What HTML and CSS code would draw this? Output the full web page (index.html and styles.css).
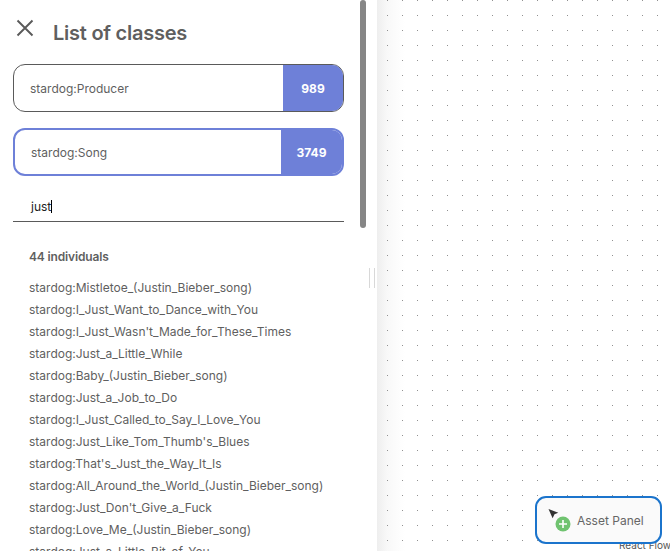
FILE: index.html
```html
<!DOCTYPE html>
<html lang="en">
<head>
<meta charset="utf-8">
<title>List of classes</title>
<link rel="stylesheet" href="styles.css">
</head>
<body>
<div class="app">
  <aside class="sidebar">
    <div class="content">
      <header class="header">
        <svg class="close" width="18" height="18" viewBox="0 0 18 18"><path d="M1.5 1.5 16.5 16.5M16.5 1.5 1.5 16.5"/></svg>
        <h1>List of classes</h1>
      </header>
      <div class="class-card"><span>stardog:Producer</span><b>989</b></div>
      <div class="class-card selected"><span>stardog:Song</span><b>3749</b></div>
      <div class="search"><span>just</span><i class="caret"></i></div>
      <h2>44 individuals</h2>
      <ul class="individuals">
        <li>stardog:Mistletoe_(Justin_Bieber_song)</li>
        <li>stardog:I_Just_Want_to_Dance_with_You</li>
        <li>stardog:I_Just_Wasn't_Made_for_These_Times</li>
        <li>stardog:Just_a_Little_While</li>
        <li>stardog:Baby_(Justin_Bieber_song)</li>
        <li>stardog:Just_a_Job_to_Do</li>
        <li>stardog:I_Just_Called_to_Say_I_Love_You</li>
        <li>stardog:Just_Like_Tom_Thumb's_Blues</li>
        <li>stardog:That's_Just_the_Way_It_Is</li>
        <li>stardog:All_Around_the_World_(Justin_Bieber_song)</li>
        <li>stardog:Just_Don't_Give_a_Fuck</li>
        <li>stardog:Love_Me_(Justin_Bieber_song)</li>
        <li>stardog:Just_a_Little_Bit_of_You</li>
      </ul>
    </div>
    <div class="scrollbar"><div class="thumb"></div></div>
    <div class="resizer"></div>
  </aside>
  <main class="canvas">
    <svg class="grid" width="293" height="551"><defs><pattern id="dots" width="15" height="15" patternUnits="userSpaceOnUse"><rect x="10" width="1" height="1"/></pattern></defs><path fill="url(#dots)" d="M0 0H293V551H0Z"/></svg>
    <div class="attribution">React Flow</div>
    <button class="asset-panel">
      <svg width="24" height="24" viewBox="0 0 24 24"><path class="pointer" d="M.5 1 10.3 4.8 6.5 6.3 4.6 10.2Z"/><circle cx="15" cy="16" r="7.5"/><path class="plus" d="M15 12v8M11 16h8"/></svg>
      <span>Asset Panel</span>
    </button>
  </main>
</div>
</body>
</html>
```
FILE: styles.css
```css
* { box-sizing: border-box; }
body { margin: 0; overflow: hidden; font: 12px/22px Inter, sans-serif; color: #5f5f5f; background: #fff; }
.app { display: flex; height: 551px; overflow: hidden; }
.sidebar { display: flex; width: 377px; flex: none; }
.content { width: 360px; padding: 0 16px 0 13px; flex: none; }
.header { display: flex; align-items: flex-start; height: 64px; padding: 19px 0 0 3px; }
.close { fill: none; stroke: #5a5a5a; stroke-width: 1.9; }
h1 { margin: 2px 0 0 19px; font-size: 20px; line-height: 24px; font-weight: 600; letter-spacing: -.25px; }
.class-card { display: flex; align-items: stretch; justify-content: space-between; height: 48px; margin-bottom: 16px; border: 1px solid #5a5a5a; border-radius: 12px; overflow: hidden; }
.class-card span { padding: 1px 0 0 16px; align-self: center; }
.class-card b { display: flex; align-items: center; justify-content: center; width: 60px; padding-top: 1px; background: #6e80d8; color: #fff; font-weight: 700; }
.selected { border: 2px solid #6e80d8; margin-bottom: 15px; }
.selected b { width: 61px; }
.search { display: flex; align-items: center; height: 31px; padding: 1px 0 0 18px; border-bottom: 1px solid #5a5a5a; color: #222; }
.caret { width: 1px; height: 13px; background: #000; }
h2 { margin: 24px 0 9px 16px; font-size: 12px; line-height: 22px; font-weight: 600; letter-spacing: -.15px; }
.individuals { list-style: none; margin: 0 0 0 16px; padding: 0; white-space: nowrap; }
.scrollbar { width: 6px; }
.thumb { height: 228px; border-radius: 3px; background: #868686; }
.resizer { width: 6px; height: 20px; margin: 268px 0 0 3px; border: solid #d8d8d8; border-width: 0 1px; }
.canvas { position: relative; flex: 1; background: linear-gradient(90deg, #eee, #f8f8f8 10px, #fdfdfd 22px, #fff 28px); }
.grid { display: block; fill: #919191; }
.attribution { position: absolute; right: -1px; bottom: -1px; font-size: 10px; line-height: 14px; color: #555; }
.asset-panel { position: absolute; right: 8px; bottom: 7px; display: flex; align-items: center; gap: 5px; width: 127px; height: 48px; padding: 0 0 0 11px; border: 2px solid #1b74cc; border-radius: 11px; background: #fafafa; font: 12px Inter, sans-serif; color: #666; white-space: nowrap; }
.asset-panel svg { flex: none; }
.asset-panel span { padding-top: 1px; }
.pointer { fill: #333; }
.asset-panel circle { fill: #70c370; }
.plus { fill: none; stroke: #fff; stroke-width: 1.6; }
```
